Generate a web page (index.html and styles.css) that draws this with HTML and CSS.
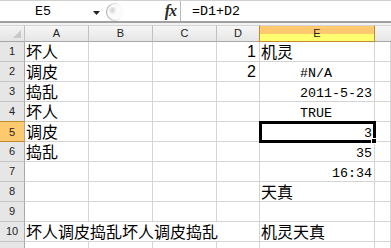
FILE: index.html
```html
<!DOCTYPE html>
<html lang="zh-CN">
<head>
<meta charset="utf-8">
<title>Sheet</title>
<link rel="stylesheet" href="styles.css">
</head>
<body>
<div class="app">
  <div class="fbar">
    <div class="namebox">E5</div>
    <div class="dd"><svg width="7" height="4" viewBox="0 0 7 4"><path d="M0 0H7L3.5 4Z" fill="#222"/></svg></div>
    <div class="splitter"><svg width="24" height="20" viewBox="0 0 24 20">
      <defs>
        <linearGradient id="rim" x1="0" y1="0" x2="1" y2="0"><stop offset="0" stop-color="#b8b8b8"/><stop offset="0.55" stop-color="#dcdcdc"/><stop offset="1" stop-color="#ffffff" stop-opacity="0"/></linearGradient>
        <radialGradient id="dot" cx="0.5" cy="0.45" r="0.5"><stop offset="0" stop-color="#cfcfcf"/><stop offset="1" stop-color="#f2f2f2"/></radialGradient>
      </defs>
      <circle cx="12" cy="10" r="8.5" fill="#fbfbfb" stroke="url(#rim)" stroke-width="1.2"/>
      <ellipse cx="9.5" cy="8.5" rx="3.5" ry="3.8" fill="url(#dot)"/>
    </svg></div>
    <div class="fx">fx</div>
    <div class="formula">=D1+D2</div>
  </div>
  <div class="fbar-edge"></div>
  <div class="sheet">
    <div class="corner"><svg width="8" height="8" viewBox="0 0 8 8"><path d="M8 0V8H0Z" fill="#c8c8c8"/></svg></div>
    <div class="ch">A</div><div class="ch">B</div><div class="ch">C</div><div class="ch">D</div><div class="ch ch-sel">E</div><div class="ch ch-last"></div>

    <div class="rh">1</div><div class="c cjk">坏人</div><div class="c"></div><div class="c"></div><div class="c num">1</div><div class="c cjk">机灵</div><div class="c"></div>
    <div class="rh">2</div><div class="c cjk">调皮</div><div class="c"></div><div class="c"></div><div class="c num">2</div><div class="c mono indent">#N/A</div><div class="c"></div>
    <div class="rh">3</div><div class="c cjk">捣乱</div><div class="c"></div><div class="c"></div><div class="c"></div><div class="c mono indent">2011-5-23</div><div class="c"></div>
    <div class="rh">4</div><div class="c cjk">坏人</div><div class="c"></div><div class="c"></div><div class="c"></div><div class="c mono indent">TRUE</div><div class="c"></div>
    <div class="rh rh-sel">5</div><div class="c cjk">调皮</div><div class="c"></div><div class="c"></div><div class="c"></div><div class="c mono right active">3<span class="handle"></span></div><div class="c"></div>
    <div class="rh">6</div><div class="c cjk">捣乱</div><div class="c"></div><div class="c"></div><div class="c"></div><div class="c mono right">35</div><div class="c"></div>
    <div class="rh">7</div><div class="c"></div><div class="c"></div><div class="c"></div><div class="c"></div><div class="c mono right">16:34</div><div class="c"></div>
    <div class="rh">8</div><div class="c"></div><div class="c"></div><div class="c"></div><div class="c"></div><div class="c cjk">天真</div><div class="c"></div>
    <div class="rh">9</div><div class="c"></div><div class="c"></div><div class="c"></div><div class="c"></div><div class="c"></div><div class="c"></div>
    <div class="rh">10</div><div class="c cjk span4">坏人调皮捣乱坏人调皮捣乱</div><div class="c cjk">机灵天真</div><div class="c"></div>
    <div class="rh rh-cut"></div><div class="c"></div><div class="c"></div><div class="c"></div><div class="c"></div><div class="c"></div><div class="c"></div>
  </div>
</div>
</body>
</html>
```
FILE: styles.css
```css
* { box-sizing: border-box; margin: 0; padding: 0; }
html, body { margin: 0; background: #ffffff; }
body { width: 391px; height: 248px; overflow: hidden; }
.app { width: 391px; height: 248px; overflow: hidden; }

.fbar { display: flex; height: 21px; background: #ffffff; border-top: 1px solid #d0d0d0; }
.namebox { width: 86px; text-align: center; font: 13.33px/20px "Liberation Mono", monospace; color: #000; padding-top: 1px; }
.dd { width: 17px; display: flex; align-items: center; padding-left: 7px; padding-top: 3px; }
.splitter { width: 24px; display: flex; align-items: flex-start; padding-top: 1px; }
.fx { width: 54px; font: italic 600 16px/19px "Liberation Serif", serif; color: #2a2a2a; text-align: right; padding-right: 4px; letter-spacing: -1px; border-right: 1px solid #b8b8b8; }
.formula { flex: 1; padding-left: 11px; font: 13.33px/21px "Liberation Mono", monospace; color: #000; }
.fbar-edge { height: 4px; border-top: 2px solid #a0a0a0; background: #f2f2f2; }

.sheet { display: grid; grid-template-columns: 25px 64px 64px 64px 43px 115px 16px; grid-template-rows: 17px repeat(11, 20px); }
.corner { background: linear-gradient(#f3f3f3, #e4e4e4); border-right: 1px solid #c0c0c0; border-bottom: 1px solid #a8a8a8; border-top: 1px solid #d6d6d6; display: flex; align-items: flex-end; justify-content: flex-end; padding: 0 3px 3px 0; }
.ch { background: linear-gradient(#f6f6f6, #e6e6e6); border-right: 1px solid #c0c0c0; border-bottom: 1px solid #a8a8a8; border-top: 1px solid #d6d6d6; font: 11px/15px "Liberation Sans", Arial, sans-serif; color: #222; text-align: center; }
.ch-sel { background: linear-gradient(#ffc96f 0, #ffc96f 50%, #ffff70 50%, #ffff70 100%); border-right: 1px solid #c48a2e; border-bottom: 1px solid #c48a2e; border-left: 1px solid #c48a2e; margin-left: -1px; }
.ch-last { border-right: none; }
.rh { background: #e6e6e6; border-right: 1px solid #a8a8a8; border-bottom: 1px solid #c4c4c4; font: 11px/19px "Liberation Sans", Arial, sans-serif; color: #222; text-align: center; }
.rh-sel { background: #ffc96f; border-bottom: 1px solid #c48a2e; border-top: 1px solid #c48a2e; margin-top: -1px; line-height: 20px; }

.c { border-right: 1px solid #d4d4d4; border-bottom: 1px solid #d4d4d4; display: flex; align-items: flex-end; white-space: nowrap; color: #000; min-width: 0; }
.cjk { font: 16px/16px "Noto Sans CJK SC", sans-serif; padding: 0 0 2px 1px; }
.num { font: 16px/16px "Liberation Sans", Arial, sans-serif; justify-content: flex-end; padding: 0 3px 1px 0; }
.mono { font: 13.33px/14px "Liberation Mono", monospace; padding-bottom: 0; }
.indent { padding-left: 40px; }
.right { justify-content: flex-end; padding-right: 2px; }
.span4 { grid-column: span 4; }
.active { position: relative; outline: 3px solid #000; outline-offset: -2px; }
.handle { position: absolute; right: -3px; bottom: -3px; width: 6px; height: 6px; background: #000; border: 1px solid #fff; }
```
